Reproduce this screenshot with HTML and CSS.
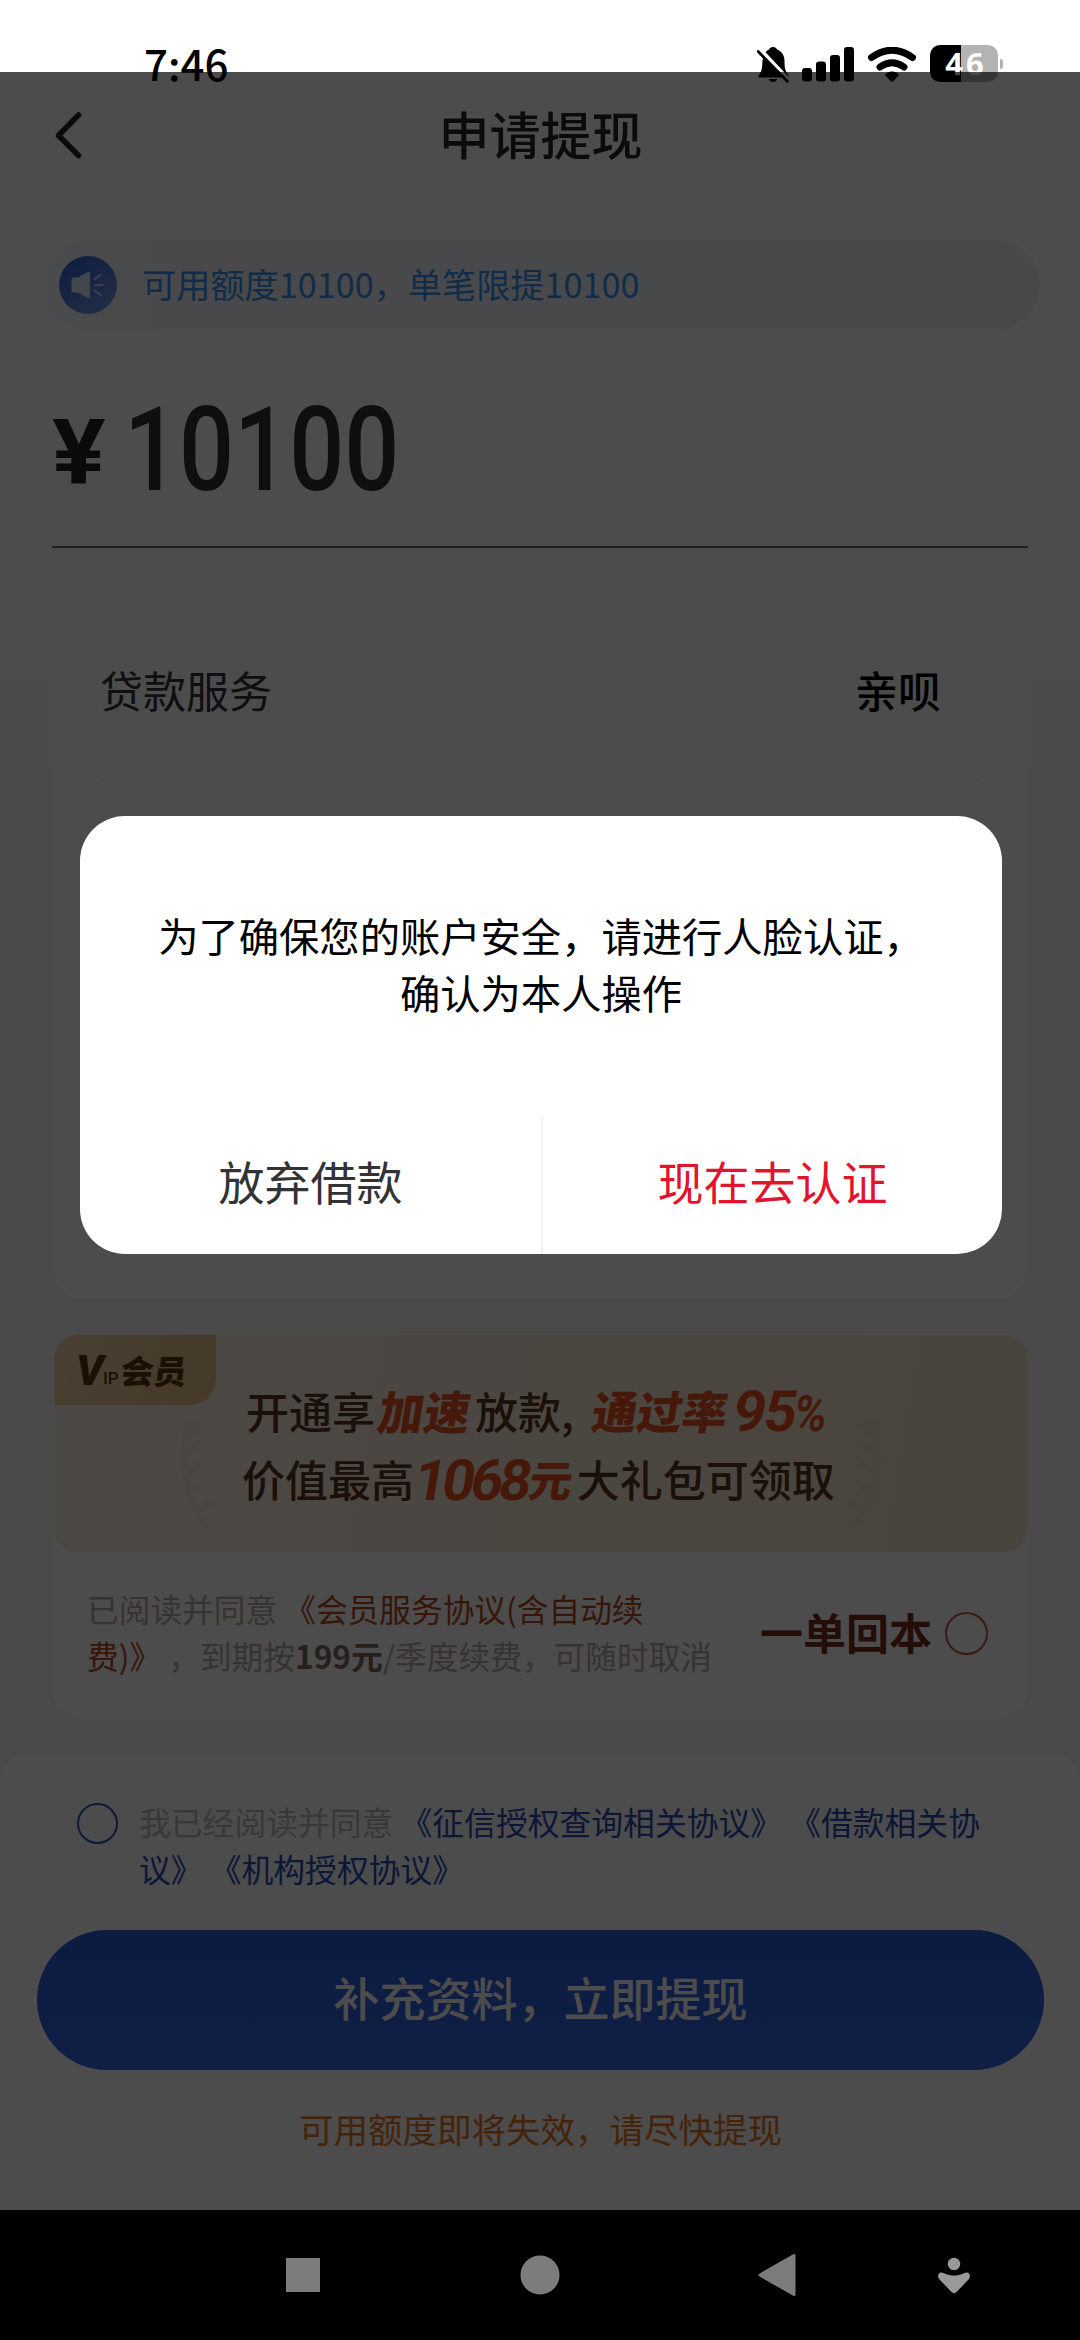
FILE: index.html
```html
<!DOCTYPE html>
<html lang="zh-CN">
<head>
<meta charset="utf-8">
<title>申请提现</title>
<link rel="stylesheet" href="styles.css">
</head>
<body>
<div class="screen">
  <div class="statusbar">
    <span class="clock">7:46</span>
    <div class="status-icons">
      <svg class="bell" width="32" height="37" viewBox="0 0 32 37">
        <path d="M16 1c2.200 0 3.500 1 4 2.500 5 2 7.500 6 7.500 11.500 0 8 1 10 4 14.500v2H1.500v-2c3.500-4.500 3.500-7 4-14.500C6 9.500 8 5.500 12 3.500 12.500 2 13.800 1 16 1z"/>
        <path d="M11.500 33h9c-1 2-2.500 3-4.500 3s-3.500-1-4.500-3z"/>
        <path d="M2.500 3L32 34.500" stroke="#fff" stroke-width="4.500"/>
        <path d="M1.200 5.500L30.500 35.500" stroke="#000" stroke-width="2.800" stroke-linecap="round"/>
      </svg>
      <svg class="signal" width="52" height="35" viewBox="0 0 52 35">
        <rect x="0" y="21" width="10" height="13.500" rx="3"/>
        <rect x="14" y="14.500" width="10" height="20" rx="3"/>
        <rect x="28" y="8" width="10" height="26.500" rx="3"/>
        <rect x="42" y="0" width="10" height="34.500" rx="3"/>
      </svg>
      <svg class="wifi" width="48" height="35" viewBox="0 0 48 35">
        <path d="M3.500 10.500Q24-4 44.500 10.500M12 20Q24 11.500 36 20" fill="none" stroke="#000" stroke-width="7" stroke-linecap="round"/>
        <path d="M24 24.500c3 0 5 1 6.500 2.500.6.7.5 1.200 0 1.800L25.500 34c-1 1-2 1-3 0l-5-5.200c-.5-.6-.6-1.100 0-1.800 1.500-1.500 3.500-2.500 6.500-2.500z"/>
      </svg>
      <div class="battery"><span class="cell">46</span><i class="nub"></i></div>
    </div>
  </div>

  <div class="page">
    <header class="titlebar">
      <svg class="back" width="27" height="47" viewBox="0 0 27 47"><path d="M23.500 3L3.500 23.500l20 20" fill="none" stroke="#262626" stroke-width="5.500" stroke-linecap="round" stroke-linejoin="round"/></svg>
      <h1>申请提现</h1>
      <span class="back-space"></span>
    </header>

    <div class="notice">
      <span class="horn">
        <svg width="36" height="30" viewBox="0 0 36 30">
          <path d="M3 7.500h5L18 2q2-.8 2 1.500v23q0 2.200-2 1.400L8 22.500H3q-1.500 0-1.500-1.700V9.200q0-1.700 1.500-1.700z" fill="#dfe9ff"/>
          <path d="M24.500 9.500l6-4.500M25.500 15h7M24.500 20.500l6 4.500" stroke="#cfdcff" stroke-width="2" stroke-linecap="round"/>
        </svg>
      </span>
      <span>可用额度10100，单笔限提10100</span>
    </div>

    <div class="amount"><span class="yen">¥</span><span class="digits">10100</span></div>

    <section class="card service">
      <div class="row"><span>贷款服务</span><b>亲呗</b></div>
    </section>

    <section class="card vip">
      <div class="banner">
        <div class="badge"><span class="v">V</span><span class="ip">IP</span><span class="member">会员</span></div>
        <svg class="laurel left" width="40" height="110" viewBox="0 0 40 110"><path d="M14 4Q-4 60 30 106M10 20l12-12M8 38l14-12M9 56l14-10M14 74l13-8M22 90l12-5"/></svg>
        <svg class="laurel right" width="40" height="110" viewBox="0 0 40 110"><path d="M14 4Q-4 60 30 106M10 20l12-12M8 38l14-12M9 56l14-10M14 74l13-8M22 90l12-5"/></svg>
        <p class="promo first"><span>开通享</span><em class="speed">加速</em><span>放款</span><span class="comma">,</span><em class="rate">通过率</em><em class="num">95<small>%</small></em></p>
        <p class="promo second"><span>价值最高</span><em class="num">1068</em><em class="yuan">元</em><span>大礼包可领取</span></p>
      </div>
      <div class="consent">
        <p>已阅读并同意 <a>《会员服务协议(含自动续<br>费)》</a> ，到期按<b>199元</b>/季度续费，可随时取消</p>
        <div class="choice"><b>一单回本</b><i class="radio red"></i></div>
      </div>
    </section>

    <footer class="bottom">
      <div class="terms">
        <i class="radio blue"></i>
        <p>我已经阅读并同意 <a>《征信授权查询相关协议》 《借款相关协<br>议》 《机构授权协议》</a></p>
      </div>
      <div class="submit">补充资料，立即提现</div>
      <p class="hint">可用额度即将失效，请尽快提现</p>
    </footer>
  </div>

  <nav class="navbar">
    <svg width="1080" height="130" viewBox="0 0 1080 130">
      <rect x="286" y="48" width="34" height="34" fill="#7c7c7c"/>
      <circle cx="540" cy="65" r="19.500" fill="#7c7c7c"/>
      <path d="M794 45.500v39L760 65z" fill="#7c7c7c" stroke="#7c7c7c" stroke-width="3" stroke-linejoin="round"/>
      <circle cx="954" cy="54" r="6.200" fill="#999"/>
      <path d="M939 63.500c1.500-1.800 3.500-1 5.500 0 6.500 2.800 12.500 2.800 19 0 2-1 4-1.800 5.500 0 1.500 2 1 4.500-.5 6l-12 12.500c-1.500 1.500-3.500 1.500-5 0l-12-12.500c-1.500-1.500-2-4-.5-6z" fill="#999"/>
    </svg>
  </nav>

  <div class="mask">
    <div class="dialog">
      <p>为了确保您的账户安全，请进行人脸认证，<br>确认为本人操作</p>
      <div class="actions"><span>放弃借款</span><span class="primary">现在去认证</span></div>
    </div>
  </div>
</div>
</body>
</html>
```
FILE: styles.css
```css
* { box-sizing: border-box; }
body {
  margin: 0;
  font-family: "Noto Sans CJK SC", "Noto Sans", sans-serif;
  background: #fff;
}
p, h1 { margin: 0; }
em, i { font-style: normal; }
.screen {
  position: relative;
  width: 1080px;
  height: 2340px;
  overflow: hidden;
  display: flex;
  flex-direction: column;
}

/* status bar */
.statusbar {
  height: 90px;
  flex: none;
  display: flex;
  justify-content: space-between;
  align-items: flex-start;
  padding: 45px 77px 0 144px;
}
.clock { font-size: 42px; font-weight: 500; line-height: 36px; }
.status-icons { display: flex; align-items: flex-start; }
.bell { margin: 1px 13px 0 0; }
.signal { margin: 2px 14px 0 0; }
.wifi { margin: 2px 14px 0 0; }
.battery { display: flex; align-items: center; }
.cell {
  width: 68px;
  height: 37px;
  border-radius: 10px;
  background: linear-gradient(90deg, #000 46%, #b3b3b3 46%);
  color: #fff;
  font: 700 31px/37px "Noto Sans", sans-serif;
  text-align: center;
  letter-spacing: 3px;
  padding-left: 4px;
}
.nub { width: 3px; height: 10px; margin-left: 2px; border-radius: 0 4px 4px 0; background: #b3b3b3; }

/* page */
.page {
  flex: 1;
  display: flex;
  flex-direction: column;
  background: linear-gradient(#fff 500px, #f8f8f8 720px);
}
.titlebar {
  height: 90px;
  display: flex;
  align-items: center;
  justify-content: space-between;
  padding: 0 54px 0 55px;
}
.titlebar h1 { font-size: 51px; font-weight: 500; line-height: 80px; color: #262626; padding-bottom: 5px; }
.back-space { width: 27px; }
.notice {
  height: 90px;
  margin: 60px 40px 1px 42px;
  padding-left: 17px;
  border-radius: 45px;
  background: linear-gradient(90deg, #fafbfe, #f3f5fa 15%, #f2f5fa);
  display: flex;
  align-items: center;
  gap: 25px;
  font-size: 34.200px;
  color: #3a94f0;
}
.notice > span:last-child { padding-bottom: 5px; }
.horn {
  width: 58px;
  height: 58px;
  border-radius: 50%;
  background: linear-gradient(145deg, #2260d4, #7f9ff0);
  display: flex;
  align-items: center;
  justify-content: center;
}
.amount {
  height: 217px;
  margin: 0 52px;
  border-bottom: 2px solid #6a6a6a;
  display: flex;
  align-items: flex-start;
  color: #333;
}
.yen {
  width: 72px;
  font: 700 91px/100px Roboto, sans-serif;
  padding-top: 72px;
  color: #222;
  transform: scaleX(1.1);
  transform-origin: 0 0;
}
.digits {
  font: 500 116px/120px Roboto, sans-serif;
  padding-top: 59px;
  transform: scaleX(.835);
  transform-origin: 0 0;
}
.card { margin: 0 52px; background: #fff; border-radius: 32px; }
.service { margin-top: 65px; height: 686px; padding: 0 50px 0 48px; }
.row {
  height: 168px;
  border-bottom: 2px solid #f4f4f4;
  display: flex;
  align-items: center;
  justify-content: space-between;
  font-size: 43px;
  color: #33353a;
  padding-right: 37px;
  padding-bottom: 15px;
}
.row b { font-weight: 500; color: #000; }

/* membership banner */
.vip { margin-top: 36px; height: 385px; }
.banner {
  position: relative;
  height: 217px;
  margin-left: 2px;
  border-radius: 24px;
  overflow: hidden;
  background: linear-gradient(100deg, #fdf1e6, #f9ead8 50%, #f5e5c9);
}
.badge {
  position: absolute;
  left: 0;
  top: 0;
  width: 162px;
  height: 70px;
  border-radius: 0 0 26px 0;
  background: linear-gradient(110deg, #f5d8ad, #e9c084);
  color: #5c3b0c;
  display: flex;
  align-items: center;
  padding-left: 22px;
}
.v { font: italic 900 43px/44px Roboto, sans-serif; width: 27px; }
.ip { font: 500 17px/20px Roboto, sans-serif; width: 18px; padding-top: 16px; }
.member { font-size: 33px; font-weight: 900; transform: skewX(-6deg); line-height: 60px; }
.laurel { position: absolute; top: 83px; fill: none; stroke: #f7e8d8; stroke-width: 7; stroke-linecap: round; }
.laurel.left { left: 122px; }
.laurel.right { left: 791px; transform: scaleX(-1); stroke: #f4dfcc; }
.promo {
  position: absolute;
  display: flex;
  align-items: center;
  height: 60px;
  line-height: 60px;
  font-size: 43px;
  font-weight: 500;
  color: #5a3220;
  white-space: nowrap;
}
.promo em { color: #e8501f; font-weight: 900; transform: skewX(-9deg); }
.first { left: 192px; top: 45px; }
.second { left: 188px; top: 113px; }
.speed { font-size: 46px; margin: 0 4px; }
.comma { width: 32px; }
.rate { font-size: 45px; margin-right: 6px; }
.promo .num { font-family: Roboto, sans-serif; font-size: 57px; font-weight: 700; letter-spacing: -2px; line-height: 60px; padding-top: 5px; }
.num small { font-size: 50px; display: inline-block; transform: scaleX(.88); transform-origin: 0 50%; }
.yuan { font-size: 43px; margin: 0 4px 0 2px; }
.second .num { margin: 0 0 0 1px; letter-spacing: -4.500px; }
.consent {
  display: flex;
  align-items: center;
  justify-content: space-between;
  height: 164px;
  padding: 0 40px 0 35px;
}
.consent p { font-size: 31.700px; line-height: 47px; color: #b9aaa2; white-space: nowrap; padding-bottom: 5px; }
.consent a { color: #b84a1c; }
.consent p b { font-weight: 700; color: #826a60; }
.choice { display: flex; align-items: center; gap: 13px; padding-bottom: 2px; }
.choice b { font-size: 43px; font-weight: 700; color: #7a2a1e; line-height: 60px; padding-bottom: 5px; }
.radio { display: block; border-radius: 50%; }
.red { width: 43px; height: 43px; border: 2px solid #c2553f; }

/* agreement and submit */
.bottom { margin-top: 35px; flex: 1; background: #fff; border-radius: 24px 24px 0 0; padding: 43px 36px 0 37px; }
.terms { display: flex; align-items: flex-start; gap: 21px; padding: 5px 0 0 40px; height: 132px; }
.blue { width: 41px; height: 41px; border: 2px solid #2d50c0; flex: none; }
.terms p { font-size: 31.800px; line-height: 47px; color: #bdbdbd; white-space: nowrap; margin-top: -5px; }
.terms a { color: #2b4bb8; }
.submit {
  height: 140px;
  border-radius: 70px;
  background: linear-gradient(#285bd8, #356ae8);
  color: #fff;
  font-size: 46px;
  font-weight: 500;
  line-height: 132px;
  text-align: center;
}
.hint { margin-top: 28px; font-size: 34.500px; line-height: 60px; text-align: center; color: #e8761f; }

/* system navigation */
.navbar { height: 130px; flex: none; background: #000; }
.navbar svg { display: block; }

/* modal */
.mask {
  position: absolute;
  left: 0;
  right: 0;
  top: 72px;
  bottom: 130px;
  background: rgba(0, 0, 0, .7);
  padding: 744px 78px 0 80px;
}
.dialog {
  height: 438px;
  border-radius: 45px;
  background: #fff;
  display: flex;
  flex-direction: column;
  overflow: hidden;
  text-align: center;
}
.dialog p { flex: 1; padding-top: 90px; font-size: 40.300px; line-height: 57px; color: #000; white-space: nowrap; }
.actions { display: grid; grid-template-columns: 1fr 1fr; height: 137px; font-size: 46px; line-height: 127px; color: #333; }
.primary { color: #e2142d; border-left: 2px solid #f2f2f2; }
```
